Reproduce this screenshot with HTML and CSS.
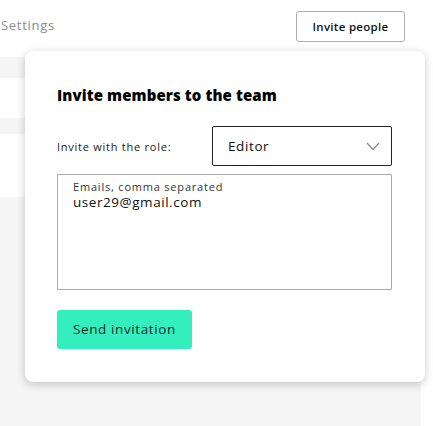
FILE: index.html
```html
<!DOCTYPE html>
<html>
<head>
<meta charset="utf-8">
<link rel="stylesheet" href="styles.css">
</head>
<body>
<div class="page">
  <header class="topbar">
    <span class="crumb">Settings</span>
    <button class="invite-btn">Invite people</button>
  </header>
  <div class="rows">
    <div class="row gray r1"></div>
    <div class="row r2"></div>
    <div class="row gray r3"></div>
    <div class="row r4"></div>
    <div class="row gray r5"></div>
  </div>
  <div class="popover">
    <h2 class="title">Invite members to the team</h2>
    <div class="role-line">
      <span class="role-label">Invite with the role:</span>
      <div class="select">
        <span class="select-value">Editor</span>
        <svg class="chev" width="14" height="9" viewBox="0 0 14 9"><path d="M1 1 L7 7.5 L13 1" fill="none" stroke="#888" stroke-width="1.2"/></svg>
      </div>
    </div>
    <div class="textarea">
      <div class="ta-label">Emails, comma separated</div>
      <div class="ta-value">user29@gmail.com</div>
    </div>
    <button class="send-btn">Send invitation</button>
  </div>
</div>
</body>
</html>
```
FILE: styles.css
```css
* { box-sizing: border-box; }
html, body { margin: 0; padding: 0; background: #fff; }
body { font-family: "Open Sans", "Liberation Sans", sans-serif; color: #1c1c1c; }
.page { position: relative; width: 433px; height: 426px; overflow: hidden; }
.topbar { height: 57px; display: flex; align-items: flex-start; justify-content: space-between; padding: 0 28px 0 1px; }
.crumb { font-size: 13px; color: #8a8a8a; margin-top: 16px; letter-spacing: 0.7px; }
.invite-btn { margin-top: 11px; width: 109px; height: 31px; background: #fff; border: 1px solid #adadad; border-radius: 3px; font-family: inherit; font-size: 11.5px; font-weight: 600; color: #111; padding: 0; letter-spacing: 0.3px; }
.rows { width: 421px; display: flex; flex-direction: column; }
.row { background: #fff; }
.gray { background: #f5f5f5; }
.r1 { height: 21px; }
.r2 { height: 40px; }
.r3 { height: 16px; }
.r4 { height: 63px; }
.r5 { height: 229px; }
.popover { position: absolute; left: 25px; top: 51px; width: 400px; height: 331px; background: #fff; border-radius: 8px; box-shadow: 0 2px 8px rgba(0,0,0,0.22); padding: 33px 33px 33px 32px; display: flex; flex-direction: column; }
.title { margin: 0; font-size: 15px; font-weight: 800; color: #000; line-height: 22px; letter-spacing: 0.1px; }
.role-line { display: flex; align-items: center; justify-content: space-between; margin-top: 20px; }
.role-label { font-size: 11px; color: #222; letter-spacing: 0.75px; }
.select { width: 180px; height: 40px; border: 1px solid #222; border-radius: 2px; display: flex; align-items: center; justify-content: space-between; padding: 0 11px 0 15px; }
.select-value { font-size: 13.5px; color: #111; letter-spacing: 0.6px; }
.chev { display: block; }
.textarea { margin-top: 8px; height: 117px; border: 1px solid #aaa; border-radius: 1px; padding: 5px 15px; display: flex; flex-direction: column; gap: 1px; }
.ta-label { font-size: 11px; color: #333; line-height: 14px; letter-spacing: 0.8px; }
.ta-value { font-size: 13.5px; color: #111; line-height: 15px; letter-spacing: 0.55px; }
.send-btn { margin-top: 20px; align-self: flex-start; width: 135px; height: 40px; background: #33efbd; border: none; border-radius: 3px; font-family: inherit; font-size: 13.5px; color: #142830; padding: 0 0 0 16px; text-align: left; letter-spacing: 0.6px; }
```
